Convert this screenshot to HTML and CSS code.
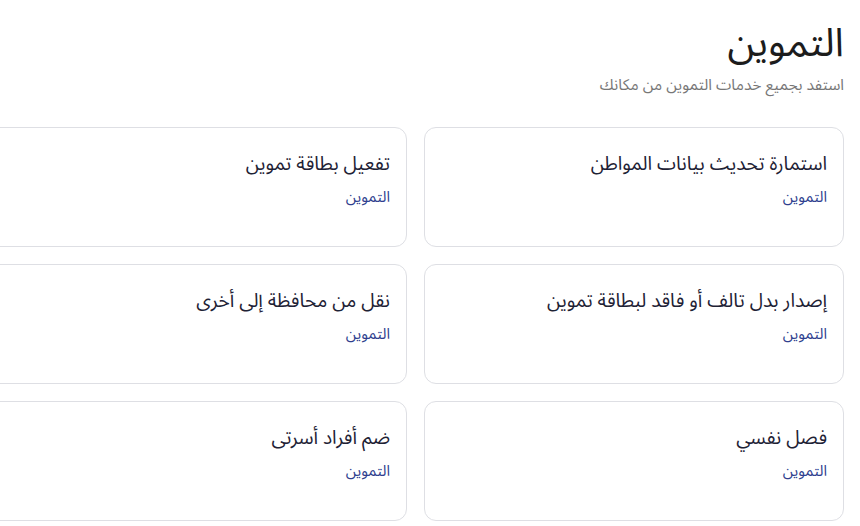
FILE: index.html
```html
<!DOCTYPE html>
<html lang="ar" dir="rtl">
<head>
<meta charset="utf-8">
<link rel="stylesheet" href="styles.css">
</head>
<body>
<main class="page">
  <header class="head">
    <h1 class="title">التموين</h1>
    <p class="lead">استفد بجميع خدمات التموين من مكانك</p>
  </header>
  <section class="grid">
    <a class="card"><h2 class="card-title">استمارة تحديث بيانات المواطن</h2><span class="card-cat">التموين</span></a>
    <a class="card"><h2 class="card-title">تفعيل بطاقة تموين</h2><span class="card-cat">التموين</span></a>
    <a class="card"><h2 class="card-title">إصدار بدل تالف أو فاقد لبطاقة تموين</h2><span class="card-cat">التموين</span></a>
    <a class="card"><h2 class="card-title">نقل من محافظة إلى أخرى</h2><span class="card-cat">التموين</span></a>
    <a class="card"><h2 class="card-title">فصل نفسي</h2><span class="card-cat">التموين</span></a>
    <a class="card"><h2 class="card-title">ضم أفراد أسرتى</h2><span class="card-cat">التموين</span></a>
  </section>
</main>
</body>
</html>
```
FILE: styles.css
```css
* { box-sizing: border-box; }
html, body { margin: 0; padding: 0; background: #fff; overflow: hidden; }
body {
  direction: rtl;
  font-family: "Noto Sans Arabic", "Noto Sans Arabic UI", "Noto Sans", "DejaVu Sans", sans-serif;
  color: #1e2235;
}
.page {
  padding: 12px 16px 0 16px;
}
.head {
  margin-bottom: 30px;
}
.title {
  margin: 0;
  font-size: 39.5px;
  font-weight: 400;
  line-height: 1.6;
  color: #1c1c1c;
}
.lead {
  margin: 0;
  font-size: 15.5px;
  line-height: 1.4;
  color: #777;
}
.grid {
  display: grid;
  grid-template-columns: repeat(2, 420px);
  gap: 17px 17px;
}
.card {
  display: flex;
  flex-direction: column;
  gap: 4px;
  height: 120px;
  padding: 21px 16px;
  border: 1px solid #dedfe4;
  border-radius: 12px;
  background: #fff;
  text-decoration: none;
}
.card-title {
  margin: 0;
  font-size: 19.2px;
  font-weight: 400;
  line-height: 1.65;
  color: #1e2235;
}
.card-cat {
  font-size: 15px;
  line-height: 1.6;
  color: #2f3f8f;
}
```
